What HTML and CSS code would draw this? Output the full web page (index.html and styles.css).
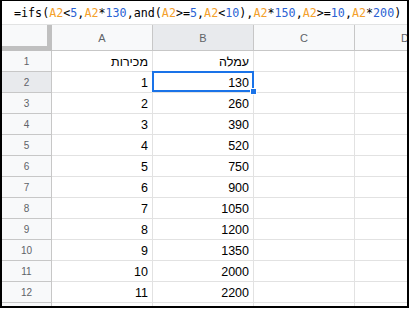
FILE: index.html
```html
<!DOCTYPE html>
<html>
<head>
<meta charset="utf-8">
<link rel="stylesheet" href="styles.css">
</head>
<body>
<div class="frame">
  <div class="fbar"><span class="fx">=ifs(<span class="ref">A2</span>&lt;<span class="num">5</span>,<span class="ref">A2</span>*<span class="num">130</span>,and(<span class="ref">A2</span>&gt;=<span class="num">5</span>,<span class="ref">A2</span>&lt;<span class="num">10</span>),<span class="ref">A2</span>*<span class="num">150</span>,<span class="ref">A2</span>&gt;=<span class="num">10</span>,<span class="ref">A2</span>*<span class="num">200</span>)</span></div>
  <div class="sheet">
    <div class="grid">
      <div class="corner"></div>
      <div class="ch">A</div>
      <div class="ch sel">B</div>
      <div class="ch">C</div>
      <div class="ch">D</div>

      <div class="rh">1</div><div class="c heb">מכירות</div><div class="c heb">עמלה</div><div class="c"></div><div class="c"></div>
      <div class="rh sel">2</div><div class="c">1</div><div class="c">130</div><div class="c"></div><div class="c"></div>
      <div class="rh">3</div><div class="c">2</div><div class="c">260</div><div class="c"></div><div class="c"></div>
      <div class="rh">4</div><div class="c">3</div><div class="c">390</div><div class="c"></div><div class="c"></div>
      <div class="rh">5</div><div class="c">4</div><div class="c">520</div><div class="c"></div><div class="c"></div>
      <div class="rh">6</div><div class="c">5</div><div class="c">750</div><div class="c"></div><div class="c"></div>
      <div class="rh">7</div><div class="c">6</div><div class="c">900</div><div class="c"></div><div class="c"></div>
      <div class="rh">8</div><div class="c">7</div><div class="c">1050</div><div class="c"></div><div class="c"></div>
      <div class="rh">9</div><div class="c">8</div><div class="c">1200</div><div class="c"></div><div class="c"></div>
      <div class="rh">10</div><div class="c">9</div><div class="c">1350</div><div class="c"></div><div class="c"></div>
      <div class="rh">11</div><div class="c">10</div><div class="c">2000</div><div class="c"></div><div class="c"></div>
      <div class="rh">12</div><div class="c">11</div><div class="c">2200</div><div class="c"></div><div class="c"></div>
      <div class="rh"></div><div class="c"></div><div class="c"></div><div class="c"></div><div class="c"></div>
    </div>
    <div class="selection"><div class="handle"></div></div>
  </div>
</div>
</body>
</html>
```

FILE: styles.css
```css
* { box-sizing: border-box; }
html, body { margin: 0; padding: 0; background: #fff; }
.frame {
  width: 409px;
  height: 308px;
  border-style: solid;
  border-color: #000;
  border-width: 1px 2px 2px 2px;
  overflow: hidden;
  background: #fff;
}
.fbar {
  height: 24px;
  border-bottom: 1px solid #e2e3e3;
  padding-left: 12px;
  display: flex;
  align-items: center;
  white-space: nowrap;
  overflow: hidden;
}
.fx {
  font-family: "DejaVu Sans Mono", "Liberation Mono", monospace;
  font-size: 11.7px;
  color: #000;
  letter-spacing: 0;
}
.ref { color: #f4a02a; }
.num { color: #2a62d3; }
.sheet { position: relative; }
.grid {
  display: grid;
  grid-template-columns: 50px 101px 101px 101px 101px;
  grid-template-rows: 26px repeat(13, 21px);
}
.corner {
  background: #f8f9fa;
  border-right: 5px solid #c0c0c0;
  border-bottom: 5px solid #c0c0c0;
  position: relative;
}
.ch {
  background: #f8f9fa;
  border-right: 1px solid #c7c7c7;
  border-bottom: 1px solid #c7c7c7;
  font-family: "Liberation Sans", Arial, sans-serif;
  font-size: 11px;
  color: #5f6368;
  display: flex;
  align-items: center;
  justify-content: center;
  padding-top: 1px;
}
.ch.sel, .rh.sel { background: #e8eaed; }
.rh {
  background: #f8f9fa;
  border-right: 1px solid #c7c7c7;
  border-bottom: 1px solid #c7c7c7;
  font-family: "Liberation Sans", Arial, sans-serif;
  font-size: 10px;
  color: #5f6368;
  display: flex;
  align-items: center;
  justify-content: center;
}
.c {
  border-right: 1px solid #e2e2e2;
  border-bottom: 1px solid #e2e2e2;
  font-family: "Liberation Sans", Arial, sans-serif;
  font-size: 12.5px;
  color: #000;
  display: flex;
  align-items: flex-end;
  justify-content: flex-end;
  padding: 0 4px 2px 0;
  white-space: nowrap;
}
.c.heb { direction: rtl; justify-content: flex-start; padding: 0 4px 2px 0; }
.selection {
  position: absolute;
  left: 150px;
  top: 46px;
  width: 102px;
  height: 21px;
  border: 2px solid #1a73e8;
}
.handle {
  position: absolute;
  right: -5px;
  bottom: -5px;
  width: 7px;
  height: 7px;
  background: #1a73e8;
  border: 1px solid #fff;
}
```
